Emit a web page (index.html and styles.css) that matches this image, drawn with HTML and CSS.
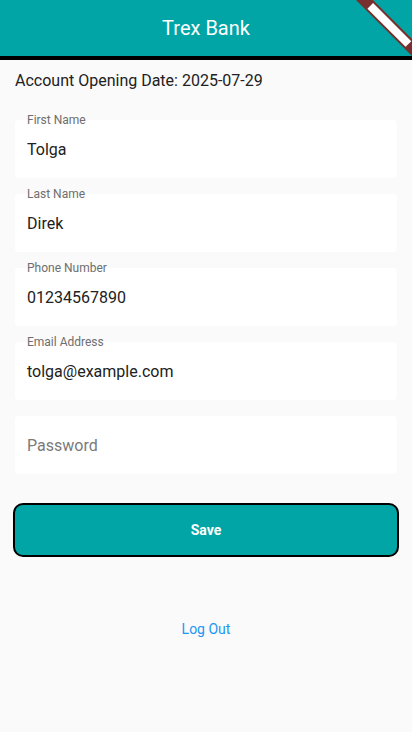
FILE: index.html
```html
<!DOCTYPE html>
<html>
<head>
<meta charset="utf-8">
<link rel="stylesheet" href="styles.css">
</head>
<body>
<header class="appbar">
  <h1 class="title">Trex Bank</h1>
  <svg class="banner" width="60" height="56" viewBox="0 0 60 56">
    <g transform="rotate(45)">
      <rect x="-10" y="-14.8" width="110" height="12" fill="#78302f"/>
      <rect x="17" y="-12.8" width="54" height="8" fill="#ffffff"/>
    </g>
  </svg>
</header>
<main class="content">
  <p class="date">Account Opening Date: 2025-07-29</p>
  <div class="fields">
    <div class="field"><span class="label">First Name</span><span class="value">Tolga</span></div>
    <div class="field"><span class="label">Last Name</span><span class="value">Direk</span></div>
    <div class="field"><span class="label">Phone Number</span><span class="value">01234567890</span></div>
    <div class="field"><span class="label">Email Address</span><span class="value">tolga@example.com</span></div>
    <div class="field"><span class="placeholder">Password</span></div>
  </div>
  <button class="save">Save</button>
  <a class="logout">Log Out</a>
</main>
</body>
</html>
```
FILE: styles.css
```css
* { box-sizing: border-box; }
html, body { margin: 0; padding: 0; }
body {
  width: 412px;
  height: 732px;
  background: #fafafa;
  font-family: Roboto, "Noto Sans", sans-serif;
  overflow: hidden;
}
.appbar {
  position: relative;
  height: 60px;
  background: #02a5a6;
  border-bottom: 4px solid #000;
  display: flex;
  align-items: center;
  justify-content: center;
  overflow: hidden;
}
.title {
  margin: 0;
  font-size: 20px;
  font-weight: 400;
  color: #fff;
  line-height: 24px;
}
.banner {
  position: absolute;
  top: 0;
  right: 0;
}
.content {
  padding: 0 15px;
  display: flex;
  flex-direction: column;
}
.date {
  margin: 11px 0 0 0;
  font-size: 16px;
  line-height: 20px;
  color: #212121;
}
.fields {
  margin-top: 29px;
  display: flex;
  flex-direction: column;
  gap: 16px;
}
.field {
  position: relative;
  height: 58px;
  background: #fff;
  border-radius: 4px;
  display: flex;
  align-items: center;
  padding: 2px 12px 0 12px;
}
.label {
  position: absolute;
  left: 12px;
  top: -7px;
  font-size: 12px;
  line-height: 14px;
  color: #6e6e6e;
}
.value {
  font-size: 16px;
  color: #212121;
  line-height: 20px;
}
.placeholder {
  font-size: 16px;
  color: #7a7a7a;
  line-height: 20px;
}
.save {
  margin: 29px -2px 0 -2px;
  height: 54px;
  background: #02a5a6;
  border: 2px solid #000;
  border-radius: 10px;
  color: #fff;
  font-family: Roboto, "Noto Sans", sans-serif;
  font-size: 14px;
  font-weight: 700;
  padding: 0;
}
.logout {
  margin-top: 62px;
  align-self: center;
  font-size: 14px;
  line-height: 20px;
  color: #2196f3;
}
```
